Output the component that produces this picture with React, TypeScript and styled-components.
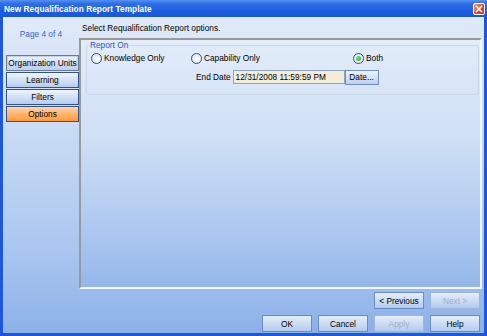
import React from "react";
import styled, { createGlobalStyle } from "styled-components";

const GlobalStyle = createGlobalStyle`
  html, body {
    margin: 0;
    padding: 0;
    background: #ffffff;
  }
  body {
    font-family: "Liberation Sans", Arial, sans-serif;
    font-size: 8.3px;
  }
`;

const Window = styled.div`
  width: 487px;
  height: 336px;
  box-sizing: border-box;
  display: flex;
  flex-direction: column;
  background: #1d57dc;
  padding: 0 3px 3px 3px;
`;

const TitleBar = styled.div`
  height: 17px;
  margin: 0 -3px;
  padding: 0 2px 0 4px;
  display: flex;
  align-items: center;
  justify-content: space-between;
  background: linear-gradient(#5592f2 0%, #2f6fe6 20%, #1f5ee0 60%, #1a56d8 100%);
  color: #ffffff;
  font-weight: bold;
  font-size: 8.3px;
  letter-spacing: 0.05px;
`;

const CloseButton = styled.div`
  width: 12px;
  height: 12px;
  border-radius: 2px;
  border: 1px solid #ffffff;
  box-sizing: border-box;
  background: linear-gradient(135deg, #f6a07a, #e0461e 60%, #c93a14);
  display: flex;
  align-items: center;
  justify-content: center;
`;

const Body = styled.div`
  flex: 1;
  display: flex;
  background: linear-gradient(#e0eaf9 0%, #cadcf4 35%, #a9c5ef 75%, #8cb1e8 100%);
`;

const Sidebar = styled.div`
  width: 76px;
  display: flex;
  flex-direction: column;
  padding: 12px 0 0 3px;
  box-sizing: border-box;
`;

const PageLabel = styled.div`
  color: #3a64c4;
  text-align: center;
  margin-right: 3px;
  height: 26px;
`;

const NavList = styled.div`
  display: flex;
  flex-direction: column;
  gap: 1px;
`;

const NavButton = styled.div<{ $active?: boolean; $first?: boolean }>`
  width: 73px;
  height: 16px;
  box-sizing: border-box;
  display: flex;
  align-items: center;
  justify-content: center;
  color: #000000;
  border: 1px solid ${(p) => (p.$first ? "#6c7a92" : "#33528e")};
  box-shadow: ${(p) => (p.$first ? "inset 0 0 0 1px #c5d2e6" : "none")};
  background: ${(p) =>
    p.$active
      ? "linear-gradient(#ffd6a8 0%, #ffb46c 50%, #ff9a3c 100%)"
      : "linear-gradient(#eef4fc 0%, #d3e1f6 50%, #b6cdef 100%)"};
`;

const Main = styled.div`
  flex: 1;
  display: flex;
  flex-direction: column;
  padding-right: 2px;
`;

const Header = styled.div`
  height: 21px;
  padding-left: 3px;
  display: flex;
  align-items: center;
  color: #000000;
`;

const ContentPanel = styled.div`
  height: 251px;
  box-sizing: border-box;
  border-top: 2px solid #9a9a9a;
  border-left: 2px solid #9a9a9a;
  border-right: 2px solid #f4f6f8;
  border-bottom: 2px solid #f4f6f8;
  background: linear-gradient(#e2ecfa 0%, #cfdff5 40%, #aac6ef 80%, #94b7ea 100%);
  padding: 0 1px 0 5px;
`;

const GroupBox = styled.fieldset`
  margin: 0;
  padding: 2px 0 0 4px;
  height: 55px;
  box-sizing: border-box;
  border: 1px solid #c9d6e6;
  border-radius: 3px;
  display: flex;
  flex-direction: column;
  gap: 6px;
`;

const Legend = styled.legend`
  color: #1f55d6;
  padding: 0 1px;
  margin-left: -2px;
  font-size: 8.3px;
`;

const RadioRow = styled.div`
  display: grid;
  grid-template-columns: 100px 162px auto;
  height: 12px;
  align-items: center;
`;

const RadioOption = styled.label`
  display: flex;
  align-items: center;
  gap: 2px;
  color: #000000;
`;

const RadioCircle = styled.span<{ $checked?: boolean }>`
  width: 11px;
  height: 11px;
  box-sizing: border-box;
  border-radius: 50%;
  border: 1px solid #2c4f78;
  background: radial-gradient(circle at 60% 60%, #ffffff 0%, #e6ecf2 60%, #cdd6e0 100%);
  display: flex;
  align-items: center;
  justify-content: center;

  &::after {
    content: "";
    display: ${(p) => (p.$checked ? "block" : "none")};
    width: 5px;
    height: 5px;
    border-radius: 50%;
    background: radial-gradient(circle at 40% 40%, #7fe07f, #1f9c1f);
  }
`;

const DateRow = styled.div`
  display: flex;
  align-items: center;
  margin-left: 105px;
  height: 14px;
`;

const FieldLabel = styled.span`
  color: #000000;
  margin-right: 2px;
`;

const DateInput = styled.div`
  width: 112px;
  height: 14px;
  box-sizing: border-box;
  border: 1px solid #8fa4bf;
  background: #f2ecd9;
  color: #000000;
  display: flex;
  align-items: center;
  padding-left: 2px;
`;

const SmallButton = styled.div`
  width: 34px;
  height: 15px;
  box-sizing: border-box;
  border: 1px solid #6f8fc4;
  background: linear-gradient(#edf3fc 0%, #d4e2f6 50%, #bcd1f0 100%);
  display: flex;
  align-items: center;
  justify-content: center;
  color: #000000;
`;

const ButtonRow = styled.div<{ $top: number }>`
  display: flex;
  justify-content: flex-end;
  gap: 6px;
  margin-top: ${(p) => p.$top}px;
  padding-right: 2px;
`;

const Button = styled.div<{ $disabled?: boolean }>`
  width: 50px;
  height: 17px;
  box-sizing: border-box;
  border: 1px solid ${(p) => (p.$disabled ? "#9fb6d8" : "#6a8cc4")};
  background: linear-gradient(#e4edfa 0%, #cddcf3 50%, #b5cbee 100%);
  display: flex;
  align-items: center;
  justify-content: center;
  color: ${(p) => (p.$disabled ? "#a4b0c4" : "#000000")};
`;

export default function App() {
  return (
    <>
      <GlobalStyle />
      <Window>
        <TitleBar>
          <span>New Requalification Report Template</span>
          <CloseButton>
            <svg width="8" height="8" viewBox="0 0 8 8">
              <path d="M1 1 L7 7 M7 1 L1 7" stroke="#ffffff" strokeWidth="1.6" />
            </svg>
          </CloseButton>
        </TitleBar>
        <Body>
          <Sidebar>
            <PageLabel>Page 4 of 4</PageLabel>
            <NavList>
              <NavButton $first>Organization Units</NavButton>
              <NavButton>Learning</NavButton>
              <NavButton>Filters</NavButton>
              <NavButton $active>Options</NavButton>
            </NavList>
          </Sidebar>
          <Main>
            <Header>Select Requalification Report options.</Header>
            <ContentPanel>
              <GroupBox>
                <Legend>Report On</Legend>
                <RadioRow>
                  <RadioOption>
                    <RadioCircle />
                    Knowledge Only
                  </RadioOption>
                  <RadioOption>
                    <RadioCircle />
                    Capability Only
                  </RadioOption>
                  <RadioOption>
                    <RadioCircle $checked />
                    Both
                  </RadioOption>
                </RadioRow>
                <DateRow>
                  <FieldLabel>End Date</FieldLabel>
                  <DateInput>12/31/2008 11:59:59 PM</DateInput>
                  <SmallButton>Date...</SmallButton>
                </DateRow>
              </GroupBox>
            </ContentPanel>
            <ButtonRow $top={3}>
              <Button>&lt; Previous</Button>
              <Button $disabled>Next &gt;</Button>
            </ButtonRow>
            <ButtonRow $top={6}>
              <Button>OK</Button>
              <Button>Cancel</Button>
              <Button $disabled>Apply</Button>
              <Button>Help</Button>
            </ButtonRow>
          </Main>
        </Body>
      </Window>
    </>
  );
}
